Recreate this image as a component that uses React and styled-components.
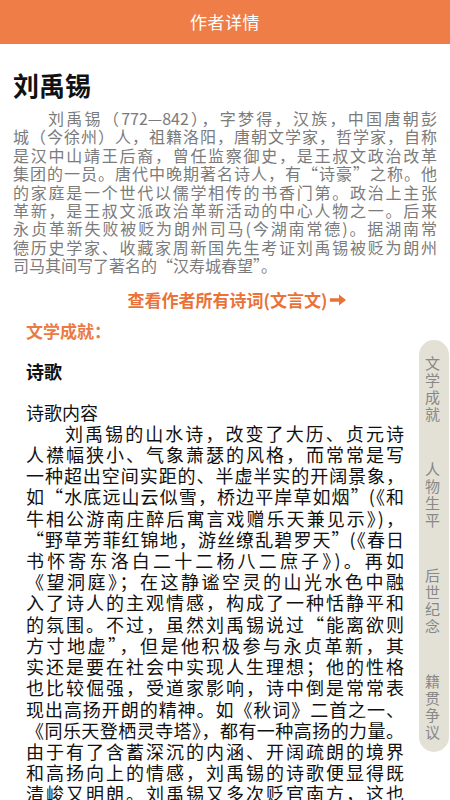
import styled, { createGlobalStyle } from 'styled-components';

const GlobalStyle = createGlobalStyle`
  html, body {
    margin: 0;
    padding: 0;
    background: #fff;
  }
  body {
    font-family: "Noto Sans CJK SC", "Noto Sans", sans-serif;
  }
`;

const Page = styled.div`
  position: relative;
  height: 100vh;
  overflow: hidden;
  background: #fff;
`;

const Header = styled.header`
  height: 44px;
  background: #ee7d47;
  color: #fff;
  font-size: 17px;
  line-height: 44px;
  text-align: center;
  letter-spacing: 0.5px;
`;

const Intro = styled.section`
  padding: 26px 13px 0;
`;

const Name = styled.h1`
  margin: 0;
  font-size: 26px;
  line-height: 30px;
  font-weight: 700;
  color: #111;
`;

const Paragraph = styled.div`
  margin-top: ${p => p.$top || 0}px;
  color: ${p => p.$color || '#111'};
  font-size: ${p => p.$size}px;
  line-height: ${p => p.$lh}px;
`;

const Line = styled.div`
  white-space: nowrap;
  text-align: justify;
  text-align-last: ${p => (p.$last ? 'left' : 'justify')};
  text-indent: ${p => p.$indent || 0}px;
`;

const LinkRow = styled.div`
  margin-top: 14px;
  padding-left: 25px;
  display: flex;
  justify-content: center;
  align-items: center;
  gap: 2px;
  color: #ea7238;
  font-size: 17px;
  font-weight: 700;
  line-height: 22px;
`;

const Content = styled.section`
  padding: 9px 46px 0 26px;
`;

const SectionTitle = styled.h2`
  margin: 0;
  color: #ec7a43;
  font-size: 17px;
  line-height: 22px;
  font-weight: 700;
`;

const SubTitle = styled.h3`
  margin: 18px 0 0;
  color: #111;
  font-size: 18px;
  line-height: 22px;
  font-weight: 700;
`;

const SideNav = styled.nav`
  position: absolute;
  top: 340px;
  right: 1px;
  width: 30px;
  box-sizing: border-box;
  padding: 14px 3px 12px 0;
  display: flex;
  flex-direction: column;
  align-items: center;
  gap: 38px;
  background: #e3e1d6;
  border-radius: 15px;
`;

const NavItem = styled.div`
  width: 15px;
  color: #888;
  font-size: 15px;
  line-height: 17px;
  text-align: center;
  word-break: break-all;
`;

const Arrow = () => (
  <svg width="18" height="14" viewBox="0 0 18 14">
    <path d="M1 5.2h9V1.5L17 7l-7 5.5V8.8H1z" fill="#ea7238" />
  </svg>
);

const introLines = [
  '刘禹锡（772—842），字梦得，汉族，中国唐朝彭',
  '城（今徐州）人，祖籍洛阳，唐朝文学家，哲学家，自称',
  '是汉中山靖王后裔，曾任监察御史，是王叔文政治改革',
  '集团的一员。唐代中晚期著名诗人，有“诗豪”之称。他',
  '的家庭是一个世代以儒学相传的书香门第。政治上主张',
  '革新，是王叔文派政治革新活动的中心人物之一。后来',
  '永贞革新失败被贬为朗州司马(今湖南常德)。据湖南常',
  '德历史学家、收藏家周新国先生考证刘禹锡被贬为朗州',
  '司马其间写了著名的“汉寿城春望”。',
];

const poemLines = [
  '刘禹锡的山水诗，改变了大历、贞元诗',
  '人襟幅狭小、气象萧瑟的风格，而常常是写',
  '一种超出空间实距的、半虚半实的开阔景象，',
  '如“水底远山云似雪，桥边平岸草如烟”(《和',
  '牛相公游南庄醉后寓言戏赠乐天兼见示》)，',
  '“野草芳菲红锦地，游丝缭乱碧罗天”(《春日',
  '书怀寄东洛白二十二杨八二庶子》)。再如',
  '《望洞庭》；在这静谧空灵的山光水色中融',
  '入了诗人的主观情感，构成了一种恬静平和',
  '的氛围。不过，虽然刘禹锡说过“能离欲则',
  '方寸地虚”，但是他积极参与永贞革新，其',
  '实还是要在社会中实现人生理想；他的性格',
  '也比较倔强，受道家影响，诗中倒是常常表',
  '现出高扬开朗的精神。如《秋词》二首之一、',
  '《同乐天登栖灵寺塔》，都有一种高扬的力量。',
  '由于有了含蓄深沉的内涵、开阔疏朗的境界',
  '和高扬向上的情感，刘禹锡的诗歌便显得既',
  '清峻又明朗。刘禹锡又多次贬官南方，这也',
];

const navItems = ['文学成就', '人物生平', '后世纪念', '籍贯争议'];

const App = () => {
  return (
    <Page>
      <GlobalStyle />
      <Header>作者详情</Header>

      <Intro>
        <Name>刘禹锡</Name>
        <Paragraph $top={9} $color="#7b7b7b" $size={16} $lh={18.4}>
          {introLines.map((text, i) => (
            <Line key={i} $indent={i === 0 ? 35 : 0} $last={i === introLines.length - 1}>
              {text}
            </Line>
          ))}
        </Paragraph>
      </Intro>

      <LinkRow>
        查看作者所有诗词(文言文)
        <Arrow />
      </LinkRow>

      <Content>
        <SectionTitle>文学成就：</SectionTitle>
        <SubTitle>诗歌</SubTitle>
        <Paragraph $top={20} $size={18} $lh={21.2}>
          <Line $last>诗歌内容</Line>
          {poemLines.map((text, i) => (
            <Line key={i} $indent={i === 0 ? 39 : 0}>
              {text}
            </Line>
          ))}
        </Paragraph>
      </Content>

      <SideNav>
        {navItems.map(item => (
          <NavItem key={item}>{item}</NavItem>
        ))}
      </SideNav>
    </Page>
  );
};

export default App;
